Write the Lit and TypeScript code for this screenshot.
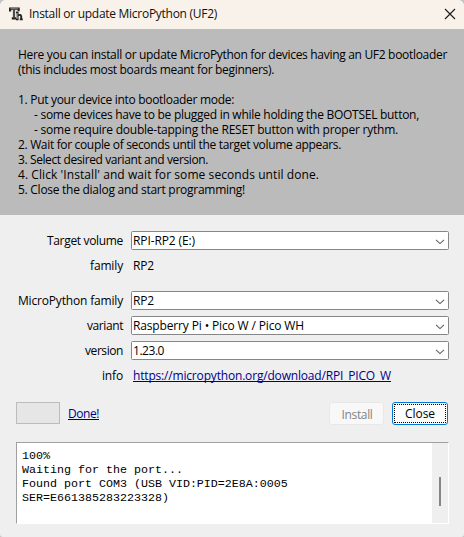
import { LitElement, html, css, svg } from "lit";
import { customElement, property } from "lit/decorators.js";

/** One line of text, tracked so that it fills a given width. */
@customElement("fit-text")
class FitText extends LitElement {
  @property() text = "";
  @property({ type: Number }) width = 0;

  static styles = css`
    :host { display: inline; white-space: pre; }
  `;

  render() {
    return html`<span class="run">${this.text}</span>`;
  }

  updated() {
    this.fit();
    document.fonts.ready.then(() => this.fit());
  }

  fit() {
    const run = this.renderRoot.querySelector(".run") as HTMLElement;
    run.style.letterSpacing = "0px";
    const natural = run.getBoundingClientRect().width;
    if (natural && this.width) {
      run.style.letterSpacing = `${(this.width - natural) / this.text.length}px`;
    }
  }
}

@customElement("combo-box")
class ComboBox extends LitElement {
  @property() text = "";
  @property({ type: Number }) width = 0;

  static styles = css`
    :host {
      display: flex; align-items: center; justify-content: space-between;
      box-sizing: border-box; height: 19px; padding: 0 3px 0 1px;
      background: #fff; border: 1px solid #868686; border-radius: 1.5px;
    }
    fit-text { line-height: 17px; }
    .chevron { display: block; width: 10px; height: 6px; margin-top: 3px; }
  `;

  render() {
    return html`
      <fit-text .text=${this.text} .width=${this.width}></fit-text>
      <svg class="chevron" viewBox="0 0 10 6">${svg`<path d="M1 .8 5 4.6 9 .8" fill="none" stroke="#606060" stroke-width="1.1"/>`}</svg>
    `;
  }
}

const INTRO: [string, number, boolean?][] = [
  ["Here you can install or update MicroPython for devices having an UF2 bootloader", 429],
  ["(this includes most boards meant for beginners).", 256],
  ["", 0],
  ["1. Put your device into bootloader mode:", 216],
  ["- some devices have to be plugged in while holding the BOOTSEL button,", 385, true],
  ["- some require double-tapping the RESET button with proper rythm.", 364, true],
  ["2. Wait for couple of seconds until the target volume appears.", 323],
  ["3. Select desired variant and version.", 190],
  ["4. Click 'Install' and wait for some seconds until done.", 301],
  ["5. Close the dialog and start programming!", 227],
];

const LOG = [
  "100%",
  "Waiting for the port...",
  "Found port COM3 (USB VID:PID=2E8A:0005",
  "SER=E661385283223328)",
];

const line = (text: string, width: number) => html`<fit-text .text=${text} .width=${width}></fit-text>`;

@customElement("app-root")
class AppRoot extends LitElement {
  static styles = css`
    :host { display: block; background: #c4c4c4; }
    .window {
      display: flex; flex-direction: column; box-sizing: border-box;
      width: 464px; height: 537px; overflow: hidden;
      background: #efefef; border-radius: 6px 6px 3px 3px;
      color: #000; font: 12px/15px "Open Sans", "Noto Sans", sans-serif;
    }
    .titlebar {
      display: flex; align-items: center; flex: none; box-sizing: border-box;
      height: 29px; padding: 0 8px 2px 9px; background: #f9f2eb; color: #111;
    }
    .logo { width: 14px; height: 14px; margin-right: 6px; }
    .title { flex: 1; }
    .close-x { width: 12px; height: 12px; }
    .intro {
      flex: none; box-sizing: border-box; height: 186px;
      padding: 18px 0 0 18px; background: #bbb;
    }
    .row { height: 15px; display: flex; }
    .row.nested { padding-left: 16px; }
    .form {
      display: grid; flex: none; grid-template-columns: 123px 318px; column-gap: 8px;
      row-gap: 6px; padding-top: 16px; align-items: center;
    }
    .form.first { grid-template-rows: 19px 19px; }
    .form.second { grid-template-rows: repeat(4, 19px); }
    .label { justify-self: end; }
    .value { padding-left: 2px; }
    a {
      color: #00008b; text-decoration: underline 1px;
      text-underline-offset: 1px; text-decoration-skip-ink: none;
    }
    .actions {
      display: flex; align-items: center; flex: none; height: 23px;
      margin: 17px 16px 0 16px;
    }
    .progress {
      box-sizing: border-box; width: 44px; height: 22px; margin-right: 8px;
      background: #e6e6e6; border: 1px solid #bcbcbc; align-self: flex-start;
    }
    .spacer { flex: 1; }
    .button {
      display: flex; align-items: center; justify-content: center; box-sizing: border-box;
      height: 23px; border-radius: 3px; background: #fdfdfd; font: inherit; padding: 0;
    }
    .install { width: 55px; margin-right: 8px; padding: 1px 0 0 1px; color: #838383; background: #f8f8f8; border: 1px solid #e8e8e8; }
    .close { width: 56px; color: #000; border: 1px solid #0078d4; padding: 1px; }
    .focus {
      display: flex; flex: 1; align-self: stretch; align-items: center; justify-content: center;
      border: 1px dotted #000;
    }
    .log {
      display: flex; flex: none; box-sizing: border-box; width: 433px; height: 82px;
      margin: 17px 0 0 16px; background: #fff;
      border: 1px solid; border-color: #a0a0a0 #fff #fff #a0a0a0;
    }
    .output {
      flex: 1; padding: 6px 0 0 5px;
      font: 11.667px/14px "Liberation Mono", monospace; white-space: pre;
    }
    .scroll { width: 16px; background: #efefef; padding-top: 34px; box-sizing: border-box; }
    .thumb { width: 2px; height: 29px; margin-left: 7px; background: #868686; }
  `;

  render() {
    return html`
      <div class="window">
        <div class="titlebar">
          <svg class="logo" viewBox="0 0 14 14">
            <g fill="none" stroke="#222">
              <path d="M1.1 4.4V1.6H9.6V4.2M5 1.6V11.2M2.8 11.4H7" stroke-width="2.2" />
              <path d="M8.6 4.8V12.4M7 5.4H8.6M7 12.4H9.6M8.6 8.8Q12 6.6 12.2 9.4V12.4M10.8 12.4H13.8" stroke-width="1.9" />
              <path d="M1.4 1.6H9.2M5 2V11M8.6 6V12" stroke="#8c8c8c" stroke-width=".8" />
            </g>
          </svg>
          <span class="title">${line("Install or update MicroPython (UF2)", 188)}</span>
          <svg class="close-x" viewBox="0 0 12 12">
            <path d="M1 1 11 11M11 1 1 11" fill="none" stroke="#1a1a1a" stroke-width="1.1" />
          </svg>
        </div>
        <div class="intro">
          ${INTRO.map(([t, w, nested]) => html`<div class="row ${nested ? "nested" : ""}">${t ? line(t, w) : ""}</div>`)}
        </div>
        <div class="form first">
          <span class="label">${line("Target volume", 76)}</span>
          <combo-box .text=${"RPI-RP2 (E:)"} .width=${62}></combo-box>
          <span class="label">${line("family", 33)}</span>
          <span class="value">${line("RP2", 21)}</span>
        </div>
        <div class="form second">
          <span class="label">${line("MicroPython family", 105)}</span>
          <combo-box .text=${"RP2"} .width=${21}></combo-box>
          <span class="label">${line("variant", 36)}</span>
          <combo-box .text=${"Raspberry Pi • Pico W / Pico WH"} .width=${171}></combo-box>
          <span class="label">${line("version", 38)}</span>
          <combo-box .text=${"1.23.0"} .width=${31}></combo-box>
          <span class="label">${line("info", 21)}</span>
          <span class="value"><a>${line("https://micropython.org/download/RPI_PICO_W", 258)}</a></span>
        </div>
        <div class="actions">
          <div class="progress"></div>
          <a>${line("Done!", 31)}</a>
          <div class="spacer"></div>
          <button class="button install" disabled>${line("Install", 31)}</button>
          <button class="button close"><span class="focus">${line("Close", 30)}</span></button>
        </div>
        <div class="log">
          <div class="output">${LOG.map((l) => html`<div>${l}</div>`)}</div>
          <div class="scroll"><div class="thumb"></div></div>
        </div>
      </div>
    `;
  }
}
